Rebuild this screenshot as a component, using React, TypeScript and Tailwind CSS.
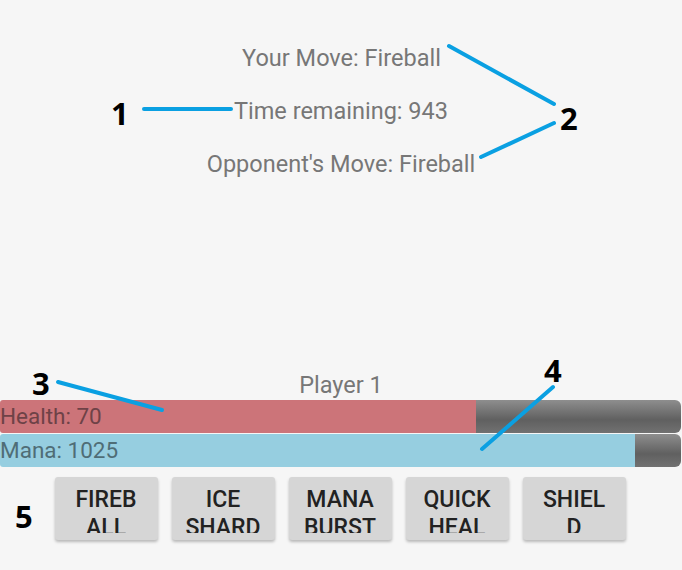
import React from "react";

const moves: [string, string][] = [
  ["FIREB", "ALL"],
  ["ICE", "SHARD"],
  ["MANA", "BURST"],
  ["QUICK", "HEAL"],
  ["SHIEL", "D"],
];

function Bar({ pct, fill, text, label }: { pct: number; fill: string; text: string; label: string }) {
  return (
    <div className="flex h-[33px] w-[681px]">
      <div className={`relative h-full rounded-l-[3px] ${fill}`} style={{ width: `${pct}px` }}>
        <span className={`absolute left-0 top-0 leading-[33px] text-[22.5px] whitespace-nowrap ${text}`}>{label}</span>
      </div>
      <div className="h-full flex-1 rounded-r-[6px] bg-[linear-gradient(to_bottom,#8e8e8e,#606060_60%,#717171)]" />
    </div>
  );
}

export default function App() {
  return (
    <div
      className="relative flex h-[570px] w-full flex-col bg-[#f6f6f6] overflow-hidden"
      style={{ fontFamily: "Roboto, 'Noto Sans', sans-serif" }}
    >
      <div className="flex flex-col items-center pt-[32px] text-[23.5px] leading-[53px] text-[#777777]">
        <div className="pl-[1px]">Your Move: Fireball</div>
        <div>Time remaining: 943</div>
        <div>Opponent's Move: Fireball</div>
      </div>
      <div className="flex-1" />
      <div className="flex flex-col">
        <div className="text-center text-[23.5px] leading-[30px] text-[#777777]">Player 1</div>
        <div className="flex flex-col gap-[1px]">
          <Bar pct={476} fill="bg-[#cc7479]" text="text-[#6e4247]" label="Health: 70" />
          <Bar pct={635} fill="bg-[#96cee0]" text="text-[#4f6d76]" label="Mana: 1025" />
        </div>
        <div className="mt-[10px] mb-[30px] flex justify-center gap-[14px] pr-[2px]">
          {moves.map(([a, b]) => (
            <div
              key={a}
              className="h-[63px] w-[103px] rounded-[3px] bg-[#d6d6d6] pt-[9px] shadow-[0_2px_3px_rgba(0,0,0,0.25)]"
            >
              <div className="h-[47px] overflow-hidden text-center text-[23px] font-medium leading-[28px] text-[#222222]">
                <div>{a}</div>
                <div>{b}</div>
              </div>
            </div>
          ))}
        </div>
      </div>

      <svg className="pointer-events-none absolute inset-0" width="682" height="570">
        <g stroke="#0aa0e2" strokeWidth="4" strokeLinecap="round">
          <line x1="144" y1="109" x2="231" y2="109" />
          <line x1="449" y1="46" x2="554" y2="104" />
          <line x1="481" y1="157" x2="554" y2="123" />
          <line x1="58" y1="382" x2="162" y2="410" />
          <line x1="553" y1="387" x2="482" y2="449" />
        </g>
      </svg>
      <div
        className="pointer-events-none absolute inset-0 text-[31px] font-bold text-black"
        style={{ fontFamily: "'Open Sans', sans-serif" }}
      >
        <span className="absolute left-[111px] top-[93px] leading-[40px]">1</span>
        <span className="absolute left-[560px] top-[98px] leading-[40px]">2</span>
        <span className="absolute left-[32px] top-[363px] leading-[40px]">3</span>
        <span className="absolute left-[544px] top-[350px] leading-[40px]">4</span>
        <span className="absolute left-[15px] top-[496px] leading-[40px]">5</span>
      </div>
    </div>
  );
}
